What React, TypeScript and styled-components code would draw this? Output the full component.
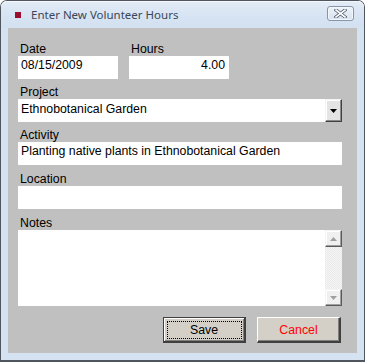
import styled, { createGlobalStyle } from "styled-components";

const GlobalStyle = createGlobalStyle`
  html, body {
    margin: 0;
    padding: 0;
    background: #ffffff;
  }
  body {
    font-family: "Liberation Sans", Arial, sans-serif;
  }
`;

const Window = styled.div`
  box-sizing: border-box;
  width: 365px;
  height: 362px;
  display: flex;
  flex-direction: column;
  border: 1px solid #4f5660;
  border-bottom-width: 2px;
  border-radius: 7px 7px 0 0;
  background: #d5e2f1;
  padding: 0 7px 7px 7px;
`;

const TitleBar = styled.div`
  height: 27px;
  display: flex;
  align-items: center;
  margin: 0 -7px;
  padding: 0 10px 0 14px;
  border-radius: 6px 6px 0 0;
  background: linear-gradient(#e3ecf7, #d6e3f2 60%, #d2e0f0);
  box-shadow: inset 0 1px 0 #f4f8fc;
`;

const TitleIcon = styled.span`
  width: 6px;
  height: 6px;
  background: #9c0c2c;
  margin-right: 10px;
  margin-top: 1px;
`;

const TitleText = styled.span`
  flex: 1;
  font-family: "Noto Sans", "Open Sans", sans-serif;
  font-size: 11.5px;
  color: #3a4758;
  padding-bottom: 1px;
`;

const CloseButton = styled.div`
  box-sizing: border-box;
  width: 27px;
  height: 15px;
  margin-top: -3px;
  border: 1px solid #8795a8;
  border-radius: 3px;
  background: linear-gradient(#eef3f9, #d7e2ef);
  box-shadow: inset 0 0 0 1px #f3f6fa;
  display: flex;
  align-items: center;
  justify-content: center;
`;

const Client = styled.div`
  flex: 1;
  background: #c0c0c0;
  padding: 14px 15px 0 10px;
  display: flex;
  flex-direction: column;
  font-size: 12.3px;
`;

const Row = styled.div<{ $top?: number }>`
  display: flex;
  gap: 11px;
  margin-top: ${(p) => p.$top ?? 0}px;
`;

const Group = styled.div<{ $width?: number }>`
  display: flex;
  flex-direction: column;
  width: ${(p) => (p.$width ? `${p.$width}px` : "100%")};
`;

const Label = styled.div`
  line-height: 14px;
  height: 14px;
  color: #000000;
  padding-left: 2px;
`;

const Field = styled.div<{ $align?: string; $height?: number }>`
  box-sizing: border-box;
  height: ${(p) => p.$height ?? 23}px;
  background: #ffffff;
  line-height: 14px;
  color: #000000;
  padding: 2px 4px 0 3px;
  text-align: ${(p) => p.$align ?? "left"};
  white-space: nowrap;
  overflow: hidden;
`;

const Combo = styled.div`
  box-sizing: border-box;
  height: 23px;
  background: #ffffff;
  display: flex;
`;

const ComboText = styled.div`
  flex: 1;
  line-height: 14px;
  padding: 3px 3px 0 3px;
`;

const ComboButton = styled.div`
  box-sizing: border-box;
  width: 17px;
  height: 23px;
  background: #e4e4e4;
  border-top: 1px solid #f4f4f4;
  border-left: 1px solid #f4f4f4;
  border-right: 1px solid #404040;
  border-bottom: 1px solid #404040;
  box-shadow: inset -1px -1px 0 #8a8a8a, inset 1px 1px 0 #ffffff;
  display: flex;
  align-items: center;
  justify-content: center;
`;

const Notes = styled.div`
  height: 76px;
  background: #ffffff;
  display: flex;
  justify-content: flex-end;
`;

const ScrollBar = styled.div`
  width: 17px;
  display: flex;
  flex-direction: column;
  background-color: #f6f6f6;
  background-image: linear-gradient(45deg, #e9e9e9 25%, transparent 25%, transparent 75%, #e9e9e9 75%),
    linear-gradient(45deg, #e9e9e9 25%, transparent 25%, transparent 75%, #e9e9e9 75%);
  background-size: 2px 2px;
  background-position: 0 0, 1px 1px;
`;

const ScrollTrack = styled.div`
  flex: 1;
`;

const ScrollArrow = styled.div`
  box-sizing: border-box;
  width: 17px;
  height: 17px;
  background: #f0f0f0;
  border-top: 1px solid #f4f4f4;
  border-left: 1px solid #f4f4f4;
  border-right: 1px solid #5a5a5a;
  border-bottom: 1px solid #5a5a5a;
  box-shadow: inset -1px -1px 0 #a0a0a0, inset 1px 1px 0 #ffffff;
  display: flex;
  align-items: center;
  justify-content: center;
`;

const ButtonRow = styled.div`
  display: flex;
  justify-content: flex-end;
  gap: 11px;
  margin-top: 11px;
  margin-right: 1px;
`;

const Button = styled.div<{ $default?: boolean; $color?: string; $width: number }>`
  box-sizing: border-box;
  width: ${(p) => p.$width}px;
  height: 26px;
  background: #d4d0c8;
  color: ${(p) => p.$color ?? "#000000"};
  display: flex;
  align-items: center;
  justify-content: center;
  position: relative;
  border-top: 1px solid ${(p) => (p.$default ? "#404040" : "#ffffff")};
  border-left: 1px solid ${(p) => (p.$default ? "#404040" : "#ffffff")};
  border-right: 2px solid #404040;
  border-bottom: 2px solid #404040;
  box-shadow: ${(p) =>
    p.$default
      ? "inset 1px 1px 0 #ffffff, inset -1px -1px 0 #808080"
      : "inset -1px -1px 0 #808080"};
`;

const FocusRing = styled.span`
  position: absolute;
  left: 3px;
  top: 3px;
  right: 2px;
  bottom: 2px;
  border: 1px dotted #000000;
`;

function Arrow({ up, color }: { up?: boolean; color: string }) {
  return (
    <svg width="7" height="4" viewBox="0 0 7 4">
      <polygon points={up ? "3.5,0 7,4 0,4" : "0,0 7,0 3.5,4"} fill={color} />
    </svg>
  );
}

export default function App() {
  return (
    <>
      <GlobalStyle />
      <Window>
        <TitleBar>
          <TitleIcon />
          <TitleText>Enter New Volunteer Hours</TitleText>
          <CloseButton>
            <svg width="13" height="9" viewBox="0 0 13 9">
              <path
                d="M2 1 L11 8 M11 1 L2 8"
                stroke="#4b5565"
                strokeWidth="3.2"
                strokeLinecap="square"
              />
              <path
                d="M2 1 L11 8 M11 1 L2 8"
                stroke="#ffffff"
                strokeWidth="1.6"
                strokeLinecap="square"
              />
            </svg>
          </CloseButton>
        </TitleBar>
        <Client>
          <Row>
            <Group $width={100}>
              <Label>Date</Label>
              <Field>08/15/2009</Field>
            </Group>
            <Group $width={100}>
              <Label>Hours</Label>
              <Field $align="right">4.00</Field>
            </Group>
          </Row>
          <Row $top={6}>
            <Group>
              <Label>Project</Label>
              <Combo>
                <ComboText>Ethnobotanical Garden</ComboText>
                <ComboButton>
                  <Arrow color="#000000" />
                </ComboButton>
              </Combo>
            </Group>
          </Row>
          <Row $top={6}>
            <Group>
              <Label>Activity</Label>
              <Field>Planting native plants in Ethnobotanical Garden</Field>
            </Group>
          </Row>
          <Row $top={7}>
            <Group>
              <Label>Location</Label>
              <Field />
            </Group>
          </Row>
          <Row $top={7}>
            <Group>
              <Label>Notes</Label>
              <Notes>
                <ScrollBar>
                  <ScrollArrow>
                    <Arrow up color="#a0a0a0" />
                  </ScrollArrow>
                  <ScrollTrack />
                  <ScrollArrow>
                    <Arrow color="#a0a0a0" />
                  </ScrollArrow>
                </ScrollBar>
              </Notes>
            </Group>
          </Row>
          <ButtonRow>
            <Button $default $width={83}>
              <FocusRing />
              Save
            </Button>
            <Button $width={84} $color="#ff0000">
              Cancel
            </Button>
          </ButtonRow>
        </Client>
      </Window>
    </>
  );
}
